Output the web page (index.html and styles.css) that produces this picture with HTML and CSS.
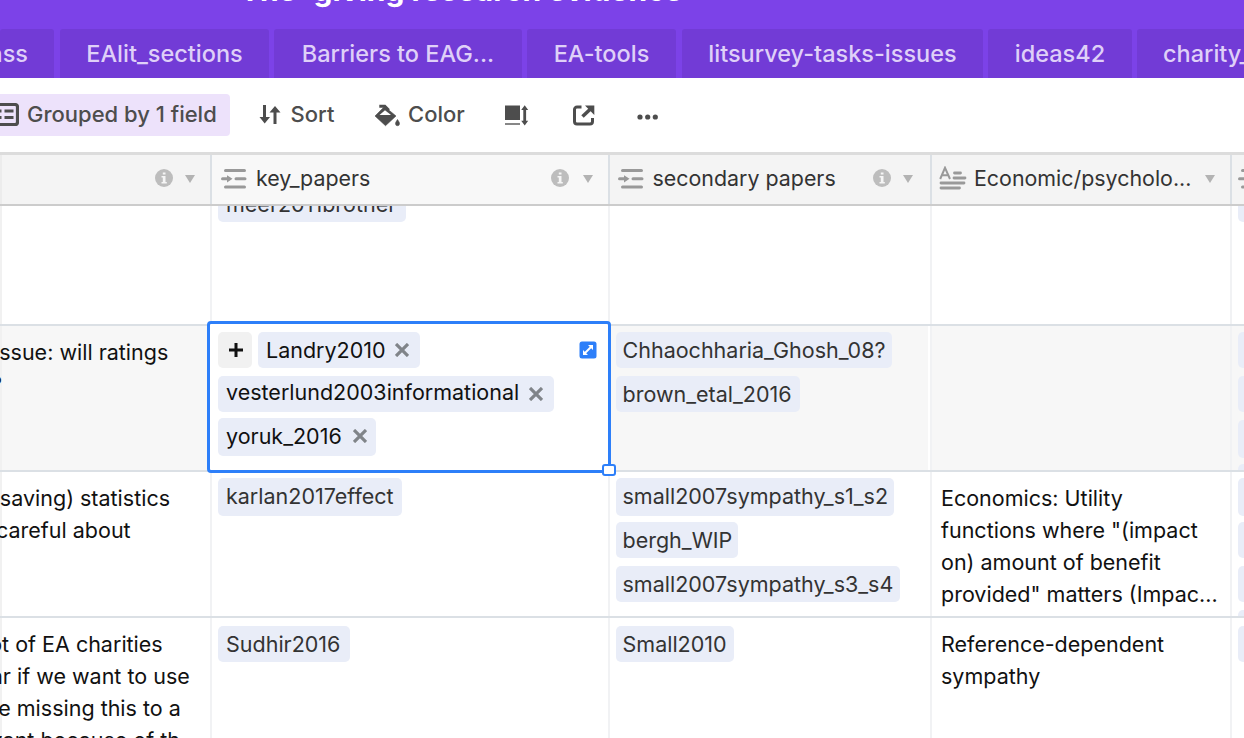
FILE: index.html
```html
<!DOCTYPE html>
<html lang="en">
<head>
<meta charset="utf-8">
<title>Literature base</title>
<link rel="stylesheet" href="styles.css">
</head>
<body>
<svg class="defs" aria-hidden="true">
  <symbol id="i-link" viewBox="0 0 26 22">
    <g stroke="currentColor" stroke-width="3" stroke-linecap="round"><path d="M4.5 2.5H23.5M15 10.8H24M4.500 19H23.500"/><path d="M1.500 10.800H8" /></g>
    <path d="M6 7.200L11.500 10.800L6 14.400Z" fill="currentColor"/>
  </symbol>
  <symbol id="i-info" viewBox="0 0 18 18">
    <circle cx="9" cy="9" r="9" fill="currentColor"/>
    <path d="M7.800 3.400h2.700v2.200H7.800zM6.500 7h4v6h1.300v1.500H6.500V13h1.300V8.500H6.500z" fill="#f5f5f5"/>
  </symbol>
  <symbol id="i-text" viewBox="0 0 28 24">
    <path d="M1.200 13L6 1.800L11 13M3 9.200H9" fill="none" stroke="currentColor" stroke-width="2"/>
    <path d="M15.500 7H21.500M15 12H26M2 17H25M2 22H20.500" stroke="currentColor" stroke-width="2.800" stroke-linecap="round"/>
  </symbol>
  <symbol id="i-x" viewBox="0 0 14 14"><path d="M1 1L13 13M13 1L1 13" stroke="currentColor" stroke-width="3.200"/></symbol>
</svg>

<header class="top">
  <div class="title"><span>The</span><span>giving research evidence</span></div>
  <nav class="tabs">
    <a class="tab t0">class</a>
    <a class="tab t1">EAlit_sections</a>
    <a class="tab t2">Barriers to EAG...</a>
    <a class="tab t3">EA-tools</a>
    <a class="tab t4">litsurvey-tasks-issues</a>
    <a class="tab t5">ideas42</a>
    <a class="tab t6">charity_</a>
  </nav>
</header>

<div class="toolbar">
  <div class="grouped">
    <svg width="26" height="24" viewBox="0 0 26 24"><rect x="1.500" y="1.500" width="23" height="20" rx="2.500" fill="none" stroke="currentColor" stroke-width="3.200"/><path d="M6 8h2.500M11.500 8h9M6 14.500h2.500M11.500 14.500h9" stroke="currentColor" stroke-width="2.800"/></svg>
    <span>Grouped by 1 field</span>
  </div>
  <div class="tool sort">
    <svg width="22" height="20" viewBox="0 0 22 20"><path d="M5.500 0v15M16 5v14" stroke="currentColor" stroke-width="3"/><path d="M.5 12h10.500L5.700 18.500zM10.500 7.500L16 1l5.500 6.500z" fill="currentColor"/></svg>
    <span>Sort</span>
  </div>
  <div class="tool color">
    <svg width="26" height="23" viewBox="0 0 26 23"><path d="M5.300 2.200h5.500l4 4" fill="none" stroke="currentColor" stroke-width="3"/><path d="M10.500 2.500L22 12 11.500 21.700 1 12zM23.500 15.500c1.500 2.500 2 3 2 4.200a2 2 0 0 1-4 0c0-1.200.5-1.700 2-4.200z" fill="currentColor" stroke="currentColor" stroke-width=".6" stroke-linejoin="round"/><path d="M11 6.200L5.500 11h11.500z" fill="#fff"/></svg>
    <span>Color</span>
  </div>
  <svg class="height" width="24" height="21" viewBox="0 0 24 21"><path d="M0 .5h15v14.500H0z" fill="currentColor"/><path d="M0 19h15" stroke="currentColor" stroke-width="1.800" opacity=".75"/><path d="M19.700 4v13" stroke="currentColor" stroke-width="2.800"/><path d="M16.200 5L19.700 .3l3.500 4.700zM16.200 15.700l3.500 4.800 3.500-4.800z" fill="currentColor"/></svg>
  <svg class="share" width="22" height="21" viewBox="0 0 22 21"><path d="M8.500 2H4a2.500 2.500 0 0 0-2.500 2.500v12A2.500 2.500 0 0 0 4 19h13a2.500 2.500 0 0 0 2.500-2.500V13" fill="none" stroke="currentColor" stroke-width="3"/><path d="M9.500 11.500L18 3.500" stroke="currentColor" stroke-width="3.600"/><path d="M12 .6h9.300v9.300z" fill="currentColor"/></svg>
  <svg class="more" width="22" height="6" viewBox="0 0 22 6"><g fill="currentColor"><circle cx="3" cy="3" r="2.600"/><circle cx="10.700" cy="3" r="2.600"/><circle cx="18.300" cy="3" r="2.600"/></g></svg>
</div>

<main class="grid">
  <div class="row head">
    <div class="cell c0"><svg class="info"><use href="#i-info"/></svg><i class="caret"></i></div>
    <div class="cell c1 active"><svg class="link"><use href="#i-link"/></svg><span class="name n1">key_papers</span><svg class="info"><use href="#i-info"/></svg><i class="caret"></i></div>
    <div class="cell c2"><svg class="link"><use href="#i-link"/></svg><span class="name n2">secondary papers</span><svg class="info"><use href="#i-info"/></svg><i class="caret"></i></div>
    <div class="cell c3"><svg class="textico"><use href="#i-text"/></svg><span class="name n3">Economic/psycholo...</span><i class="caret"></i></div>
    <div class="cell c4"><svg class="link"><use href="#i-link"/></svg></div>
  </div>

  <div class="row r1">
    <div class="cell c0"></div>
    <div class="cell c1"><span class="chip" style="width:188px">meer2011brother</span></div>
    <div class="cell c2"></div>
    <div class="cell c3"></div>
    <div class="cell c4"><span class="chip stub"></span></div>
  </div>

  <div class="row r2">
    <div class="cell c0"><p class="clip"><span class="ln s3">issue: will ratings</span><span class="ln s9">?</span></p></div>
    <div class="cell c1">
      <div class="selected">
        <div class="line"><span class="plus"><svg width="14" height="14" viewBox="0 0 14 14"><path d="M7 0v14M0 7h14" stroke="currentColor" stroke-width="3"/></svg></span><span class="chip" style="width:162px"><span>Landry2010</span><svg class="x"><use href="#i-x"/></svg></span></div>
        <span class="chip up" style="width:336px"><span>vesterlund2003informational</span><svg class="x"><use href="#i-x"/></svg></span>
        <span class="chip tall" style="width:158px"><span>yoruk_2016</span><svg class="x"><use href="#i-x"/></svg></span>
        <svg class="expand" viewBox="0 0 18 18"><rect x=".5" y=".5" width="17" height="17" rx="2.500" fill="#2d7ff9"/><path d="M6 12L12 6" stroke="#fff" stroke-width="2"/><path d="M9 4h5v5zM4 9v5h5z" fill="#fff"/></svg>
        <i class="handle"></i>
      </div>
    </div>
    <div class="cell c2"><span class="chip" style="width:276px">Chhaochharia_Ghosh_08?</span><span class="chip" style="width:184px">brown_etal_2016</span></div>
    <div class="cell c3"></div>
    <div class="cell c4"><span class="chip stub"></span><span class="chip stub"></span><span class="chip stub tall"></span><span class="chip stub"></span></div>
  </div>

  <div class="row r3">
    <div class="cell c0"><p class="clip"><span class="ln s5">(saving) statistics</span><span class="ln s1">careful about</span></p></div>
    <div class="cell c1"><span class="chip tall" style="width:184px">karlan2017effect</span></div>
    <div class="cell c2"><span class="chip tall" style="width:278px">small2007sympathy_s1_s2</span><span class="chip" style="width:122px">bergh_WIP</span><span class="chip" style="width:284px">small2007sympathy_s3_s4</span></div>
    <div class="cell c3"><p><span class="ln">Economics: Utility</span><span class="ln">functions where "(impact</span><span class="ln">on) amount of benefit</span><span class="ln">provided" matters (Impac...</span></p></div>
    <div class="cell c4"><span class="chip stub tall"></span><span class="chip stub"></span><span class="chip stub"></span><span class="chip stub"></span></div>
  </div>

  <div class="row r4">
    <div class="cell c0"><p class="clip"><span class="ln s13">lot of EA charities</span><span class="ln s19">ear if we want to use</span><span class="ln s12">be missing this to a</span><span class="ln s12">want because of th</span></p></div>
    <div class="cell c1"><span class="chip" style="width:132px">Sudhir2016</span></div>
    <div class="cell c2"><span class="chip" style="width:118px">Small2010</span></div>
    <div class="cell c3"><p><span class="ln">Reference-dependent</span><span class="ln">sympathy</span></p></div>
    <div class="cell c4"><span class="chip stub"></span></div>
  </div>
</main>
</body>
</html>
```
FILE: styles.css
```css
* { box-sizing: border-box; }
body { margin: 0; width: 1244px; height: 738px; overflow: hidden; background: #fff; font-family: Inter, "Liberation Sans", sans-serif; font-size: 21.5px; color: #111; }
svg { display: block; flex: none; }
.defs { position: absolute; width: 0; height: 0; }

.top { height: 78px; background: #7c42e8; display: flex; flex-direction: column; justify-content: space-between; overflow: hidden; }
.title { height: 8px; padding-left: 240px; color: #fff; font-weight: 700; font-size: 30px; line-height: 36px; margin-top: -28px; white-space: nowrap; display: flex; gap: 17px; }
.tabs { display: flex; height: 49px; width: 1400px; }
.tab { flex: none; height: 49px; line-height: 49px; background: #723bd6; color: #dfd0f8; font-size: 23.5px; font-weight: 500; text-align: center; border-radius: 3px 3px 0 0; margin-right: 5px; white-space: nowrap; overflow: hidden; }
.t0 { width: 54px; margin-right: 6px; display: flex; justify-content: flex-end; padding-right: 26px; }
.t1 { width: 209px; }
.t2 { width: 248px; }
.t3 { width: 149px; margin-right: 6px; }
.t4 { width: 301px; }
.t5 { width: 144px; }
.t6 { width: 160px; text-align: left; padding-left: 26px; }

.toolbar { height: 74px; display: flex; align-items: center; color: #4d4d4d; font-size: 22px; font-weight: 500; }
.grouped { width: 230px; height: 42px; background: #ede2fb; border-radius: 0 4px 4px 0; display: flex; align-items: center; }
.grouped svg { margin-left: -7px; margin-right: 8px; }
.grouped span, .tool span { white-space: nowrap; margin-top: -2px; }
.tool { display: flex; align-items: center; }
.sort { margin-left: 29px; width: 115px; gap: 9.5px; }
.color { width: 131px; gap: 8px; }
.height { margin-right: 44px; }
.share { margin-right: 42px; }
.more { margin-top: 3px; }

.grid { display: flex; flex-direction: column; }
.row { display: grid; grid-template-columns: 212px 398px 322px 300px 12px; flex: none; }
.cell { border-right: 2px solid #f1f2f4; overflow: hidden; padding: 6px; display: flex; flex-direction: column; align-items: flex-start; gap: 8px; }
.cell.c4 { border-right: 0; }
.c0 { box-shadow: inset 2px 0 #f1f1f1; padding-left: 2px; }
.head { height: 54px; border-top: 3px solid #dcdcdc; border-bottom: 2px solid #ccc; background: #f4f4f4; }
.head .cell { flex-direction: row; align-items: center; gap: 0; padding: 0 15px 2px 9px; border-right-color: #dbe0e5; }
.head .active { background: #f8f8f8; }
.head .c0 { justify-content: flex-end; box-shadow: inset 2px 0 #ececec; }
.head .c2 { padding-left: 8px; padding-right: 17px; }
.head .c3 { padding-left: 7px; padding-right: 15px; }
.head .c4 { padding: 0 0 2px 6px; }
.head .caret { border: 5px solid transparent; border-top: 8px solid #b3b3b3; border-bottom: 0; flex: none; margin-top: 1px; }
.name { font-size: 21.4px; color: #333; white-space: nowrap; flex: 1; margin: -2px 0 0 9px; }
.info { width: 18px; height: 18px; color: #bdbdbd; margin-right: 12px; margin-top: -1px; }
.active .info { margin-right: 14px; }
.link { width: 26px; height: 22px; color: #999; margin-top: 1px; }
.textico { width: 28px; height: 24px; color: #999; margin-top: -1px; }
.n2 { margin-left: 8.5px; }
.n3 { margin-left: 7px; }

.r1 { height: 120px; border-bottom: 2px solid #dbe0e5; }
.r1 .chip { margin-top: -26px; }
.r2, .r3 { height: 146px; border-bottom: 2px solid #dbe0e5; }
.r2 { background: #f7f7f7; }
.r2 .c2 { box-shadow: inset -2px 0 #fff; }
.r4 { height: 122px; overflow: hidden; }
.r4 .cell { padding-top: 8px; }
.r4 .cell p { margin-top: 2px; }
.r2 .c1 { overflow: visible; padding: 0; position: relative; }

.chip { height: 36px; flex: none; border-radius: 5px; background: #e9edf8; color: #333; padding-left: 8px; display: flex; align-items: center; white-space: nowrap; }
.c2 .chip { padding-left: 6.5px; }
.tall { height: 38px; padding-bottom: 2px; margin-bottom: -2px; }
.stub { width: 40px; }
.selected { position: absolute; left: -5px; top: -5px; width: 404px; height: 152px; background: #fff; border: 3px solid #2d7ff9; border-radius: 4px; padding: 8px; display: flex; flex-direction: column; gap: 8px; }
.selected .chip { color: #111; justify-content: space-between; padding-right: 11px; }
.selected .up span { margin-top: -5px; }
.selected .tall { margin-top: -2px; padding-bottom: 0; padding-right: 9px; }
.selected .tall span { margin-top: -2px; }
.selected .tall .x { margin-top: -2px; }
.line { display: flex; gap: 6px; }
.plus { width: 34px; height: 36px; border-radius: 5px; background: #f1f1f1; display: flex; align-items: center; justify-content: center; padding-left: 2px; }
.x { width: 14px; height: 14px; color: #808489; }
.expand { position: absolute; right: 11px; top: 17px; width: 18px; height: 18px; }
.handle { position: absolute; right: -8px; bottom: -6px; width: 14px; height: 12px; border: 2px solid #2d7ff9; border-radius: 3px; background: #fff; }

p { margin: 4px 0 0 3px; line-height: 32px; white-space: nowrap; }
.ln { display: block; }
.clip { margin-left: -5px; }
.s1 { margin-left: -1px; }
.s3 { margin-left: -3px; }
.s5 { margin-left: -5px; }
.s9 { margin-left: -6px; }
.s12 { margin-left: -12px; }
.s13 { margin-left: -13px; }
.s19 { margin-left: -19px; }
```
